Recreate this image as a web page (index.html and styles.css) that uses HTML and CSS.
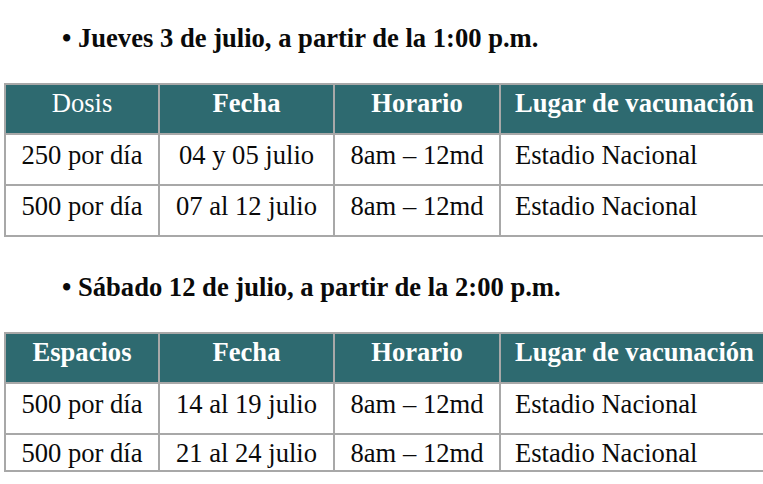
FILE: index.html
```html
<!DOCTYPE html>
<html lang="es">
<head>
<meta charset="utf-8">
<link rel="stylesheet" href="styles.css">
</head>
<body>
<div class="page">
  <p class="heading">• Jueves 3 de julio, a partir de la 1:00 p.m.</p>
  <table class="sched">
    <tr class="head">
      <th class="c1 light">Dosis</th>
      <th class="c2">Fecha</th>
      <th class="c3">Horario</th>
      <th class="c4">Lugar de vacunación</th>
    </tr>
    <tr class="row">
      <td>250 por día</td>
      <td>04 y 05 julio</td>
      <td>8am – 12md</td>
      <td class="left">Estadio Nacional</td>
    </tr>
    <tr class="row">
      <td>500 por día</td>
      <td>07 al 12 julio</td>
      <td>8am – 12md</td>
      <td class="left">Estadio Nacional</td>
    </tr>
  </table>

  <p class="heading second">• Sábado 12 de julio, a partir de la 2:00 p.m.</p>
  <table class="sched">
    <tr class="head">
      <th class="c1">Espacios</th>
      <th class="c2">Fecha</th>
      <th class="c3">Horario</th>
      <th class="c4">Lugar de vacunación</th>
    </tr>
    <tr class="row">
      <td>500 por día</td>
      <td>14 al 19 julio</td>
      <td>8am – 12md</td>
      <td class="left">Estadio Nacional</td>
    </tr>
    <tr class="row short">
      <td>500 por día</td>
      <td>21 al 24 julio</td>
      <td>8am – 12md</td>
      <td class="left">Estadio Nacional</td>
    </tr>
  </table>
</div>
</body>
</html>
```

FILE: styles.css
```css
html, body {
  margin: 0;
  padding: 0;
  background: #ffffff;
  overflow: hidden;
}

.page {
  width: 763px;
  height: 484px;
  overflow: hidden;
  padding-left: 4px;
  box-sizing: border-box;
  font-family: "Liberation Serif", Tinos, "Times New Roman", serif;
  font-size: 26.6px;
  color: #0a0a0a;
}

.heading {
  margin: 0;
  padding-top: 23px;
  padding-left: 58px;
  height: 83px;
  box-sizing: border-box;
  line-height: 30px;
  font-weight: bold;
  white-space: nowrap;
}

.heading.second {
  padding-top: 35px;
  height: 95px;
}

.sched {
  border-collapse: separate;
  border-spacing: 0;
  table-layout: fixed;
  width: 767px;
  border-top: 2px solid #a8a8a8;
  border-left: 2px solid #a8a8a8;
}

.sched th,
.sched td {
  box-sizing: border-box;
  border-right: 2px solid #a8a8a8;
  border-bottom: 2px solid #a8a8a8;
  line-height: 30px;
  text-align: center;
  white-space: nowrap;
  padding: 0;
}

.sched th {
  background: #2e6a70;
  color: #ffffff;
  font-weight: bold;
  padding-top: 3px;
  padding-bottom: 15px;
  height: 50px;
}

.sched th.light {
  font-weight: normal;
}

.sched .c1 { width: 154px; }
.sched .c2 { width: 175px; }
.sched .c3 { width: 166px; }
.sched .c4 {
  width: 270px;
  text-align: left;
  padding-left: 14px;
}

.sched td {
  padding-top: 5px;
  padding-bottom: 14px;
  height: 51px;
}

.sched td.left {
  text-align: left;
  padding-left: 14px;
}

.sched .short td {
  padding-top: 3px;
  padding-bottom: 2px;
  height: 37px;
}
```
